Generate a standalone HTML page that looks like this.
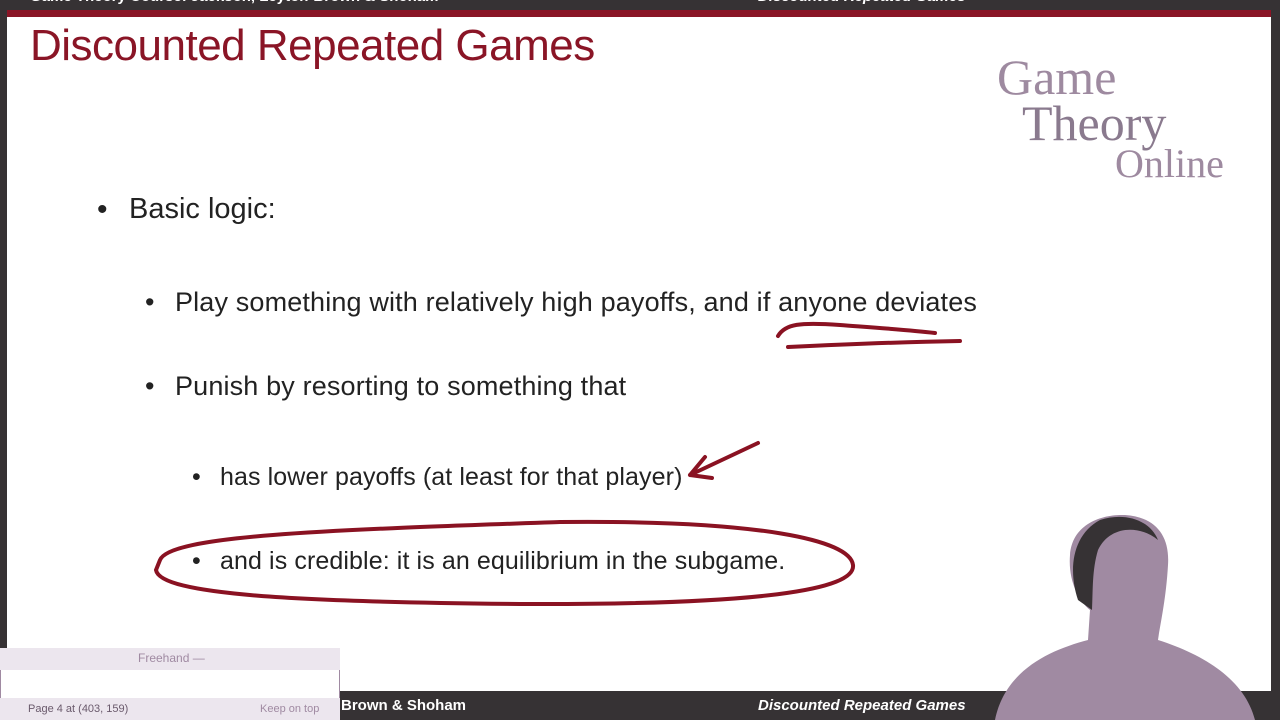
<!DOCTYPE html>
<html><head><meta charset="utf-8"><style>
body{margin:0;width:1280px;height:720px;overflow:hidden;background:#363234;position:relative;font-family:"Liberation Sans",sans-serif}
.c{position:absolute;left:7px;top:17px;width:1264px;height:674px;background:#fff}
.red{position:absolute;left:7px;top:10px;width:1264px;height:8px;background:#8a1526}
.t{position:absolute;font-size:20px;color:#222;white-space:nowrap}
</style></head><body>
<div style="position:absolute;left:30px;top:-12px;color:#fff;font-weight:bold;font-size:15px">Game Theory Course: Jackson, Leyton-Brown &amp; Shoham</div>
<div style="position:absolute;left:758px;top:-12px;color:#fff;font-weight:bold;font-style:italic;font-size:15px">Discounted Repeated Games</div>
<div class="red"></div>
<div class="c"></div>
<div style="position:absolute;left:30px;top:21px;font-size:44px;color:#8a1526;letter-spacing:-0.5px">Discounted Repeated Games</div>
<div style="position:absolute;left:997px;top:52px;font-family:'Liberation Serif',serif;color:#9e8aa0;line-height:1">
<div style="font-size:50px">Game</div>
<div style="font-size:50px;margin-left:25px;margin-top:-4px;color:#8a7a8e">Theory</div>
<div style="font-size:40px;margin-left:118px;margin-top:-4px">Online</div>
</div>
<div style="position:absolute;left:97px;top:193px;font-size:30px;color:#222">•</div>
<div class="t" style="left:129px;top:193px;font-size:29px">Basic logic:</div>
<div class="t" style="left:145px;top:287px;font-size:27px">•</div>
<div class="t" style="left:175px;top:287px;font-size:27px;letter-spacing:0.15px">Play something with relatively high payoffs, and if anyone deviates</div>
<div class="t" style="left:145px;top:371px;font-size:27px">•</div>
<div class="t" style="left:175px;top:371px;font-size:27px;letter-spacing:0.15px">Punish by resorting to something that</div>
<div class="t" style="left:192px;top:463px;font-size:25px">•</div>
<div class="t" style="left:220px;top:463px;font-size:25px;letter-spacing:0.1px">has lower payoffs (at least for that player)</div>
<div class="t" style="left:192px;top:547px;font-size:25px">•</div>
<div class="t" style="left:220px;top:547px;font-size:25px;letter-spacing:0.1px">and is credible: it is an equilibrium in the subgame.</div>
<svg width="1280" height="720" style="position:absolute;left:0;top:0">
<g fill="none" stroke="#8a1222" stroke-width="4" stroke-linecap="round">
<path d="M778 336 C785 324 800 322 840 325 C880 328 910 330 935 333"/>
<path d="M788 347 C850 344 900 342 960 341"/>
<path d="M758 443 L690 475 M690 475 L705 457 M690 475 L712 478"/>
<path d="M160 560 C170 535 330 530 560 522 C760 520 850 540 853 565 C856 590 760 605 520 604 C300 602 160 595 156 570 Z"/>
</g>
<path d="M995 720 C1005 670 1050 650 1088 640 L1090 610 C1078 600 1068 580 1070 555 C1072 525 1100 514 1125 515 C1155 517 1170 535 1168 565 C1166 600 1160 625 1158 640 C1205 655 1245 680 1255 720 Z" fill="#a08aa2"/>
<path d="M1078 600 C1068 570 1072 535 1100 520 C1125 512 1150 520 1158 540 C1140 525 1110 525 1098 550 C1092 570 1093 590 1092 610 Z" fill="#363234"/>
</svg>
<div style="position:absolute;left:0;top:648px;width:340px;height:72px;background:#fff;border:1px solid #a08aa2;border-radius:4px;box-sizing:border-box"></div>
<div style="position:absolute;left:0;top:648px;width:340px;height:22px;background:#ece6ee;font-size:12px;color:#a08aa2"><span style="position:absolute;left:138px;top:3px">Freehand —</span></div>
<div style="position:absolute;left:0;top:698px;width:340px;height:22px;background:#ece6ee;font-size:11px;color:#6a5a6c"><span style="position:absolute;left:28px;top:5px">Page 4 at (403, 159)</span><span style="position:absolute;left:260px;top:5px;color:#a08aa2">Keep on top</span></div>
<div style="position:absolute;left:341px;top:697px;color:#fff;font-weight:bold;font-size:15px">Brown &amp; Shoham</div>
<div style="position:absolute;left:758px;top:697px;color:#fff;font-weight:bold;font-style:italic;font-size:15px">Discounted Repeated Games</div>
</body></html>
